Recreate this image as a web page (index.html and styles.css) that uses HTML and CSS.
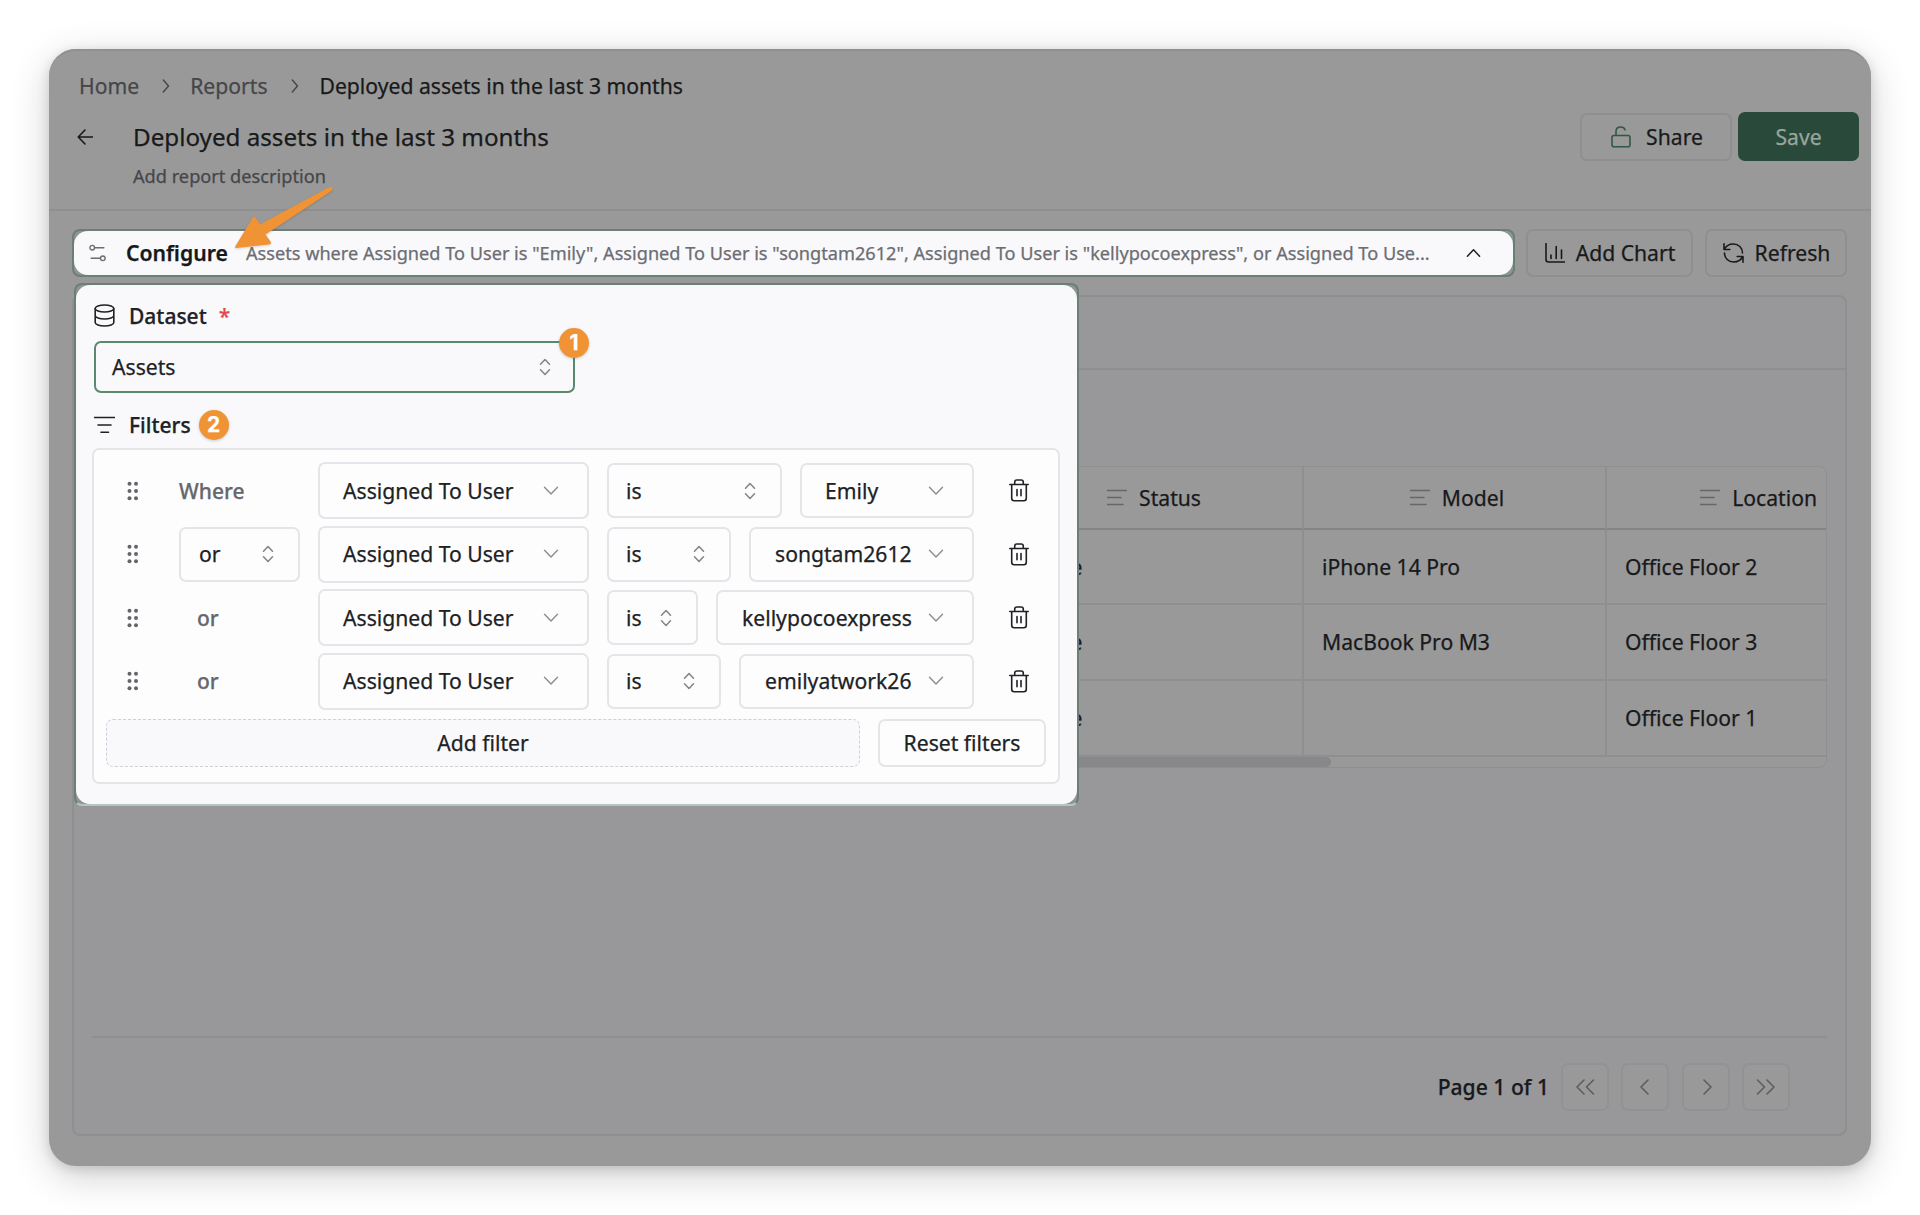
FILE: index.html
```html
<!DOCTYPE html>
<html lang="en">
<head>
<meta charset="utf-8">
<title>Deployed assets in the last 3 months</title>
<link rel="stylesheet" href="styles.css">
</head>
<body>
<svg class="sprite" width="0" height="0">
  <symbol id="down" viewBox="0 0 16 10"><path d="M1.500 1.200 8 8l6.500-6.800"/></symbol>
  <symbol id="updown" viewBox="0 0 12 18"><path d="M1.500 6.200 6 1.500l4.500 4.700M1.500 11.800 6 16.500l4.500-4.700"/></symbol>
  <symbol id="grip" viewBox="0 0 12 20"><g fill="currentColor" stroke="none"><circle cx="2.500" cy="2.700" r="2"/><circle cx="9" cy="2.700" r="2"/><circle cx="2.500" cy="10" r="2"/><circle cx="9" cy="10" r="2"/><circle cx="2.500" cy="17.200" r="2"/><circle cx="9" cy="17.200" r="2"/></g></symbol>
  <symbol id="trash" viewBox="0 0 20 23"><path d="M.8 5.500h18.400M2.700 5.500v13.800q0 2.500 2.500 2.500h9.600q2.500 0 2.500-2.500V5.500M5.700 5.500V3.200Q5.700 1 7.900 1h4.200q2.200 0 2.200 2.200v2.300M8 10.500v6.200M12 10.500v6.200"/></symbol>
  <symbol id="lines" viewBox="0 0 20 18"><path d="M0 1.500h19.500M0 8.500h14M0 15.500h16"/></symbol>
  <symbol id="crumb" viewBox="0 0 8 14"><path d="M1.300 1 6.500 7l-5.200 6"/></symbol>
</svg>

<div class="window">
  <header class="header">
    <nav class="crumbs">
      <span>Home</span><svg class="crumb-sep"><use href="#crumb"/></svg>
      <span>Reports</span><svg class="crumb-sep"><use href="#crumb"/></svg>
      <span class="current">Deployed assets in the last 3 months</span>
    </nav>
    <div class="title-row">
      <svg class="back" viewBox="0 0 16 16"><path d="M15.500 8H1.200M8 1 1.200 8 8 15"/></svg>
      <h1>Deployed assets in the last 3 months</h1>
      <button class="btn share"><svg viewBox="0 0 20 22"><path d="M5 9.500V5.500C5 2.800 7 1 9.700 1c2 0 3.700 1 4.400 2.800M3 9.500h14q2 0 2 2v7.300q0 2-2 2H3q-2 0-2-2v-7.300q0-2 2-2z"/></svg>Share</button>
      <button class="btn save">Save</button>
    </div>
    <p class="description">Add report description</p>
  </header>

  <main class="main">
    <div class="toolbar">
      <div class="frame frame-bar">
        <div class="configure">
          <svg class="sliders" viewBox="0 0 16 17"><circle cx="3" cy="3.500" r="2.200"/><path d="M5.200 3.500H14M2 13.500h8.700"/><circle cx="13" cy="13.500" r="2.200"/></svg>
          <strong>Configure</strong>
          <span class="summary">Assets where Assigned To User is "Emily", Assigned To User is "songtam2612", Assigned To User is "kellypocoexpress", or Assigned To Use...</span>
          <svg class="up" viewBox="0 0 16 10"><path d="M1.500 8.500 8 1.500l6.500 7"/></svg>
        </div>
      </div>
      <button class="btn chart"><svg viewBox="0 0 20 20"><path d="M1 .5V16.500q0 2.500 2.500 2.500h16M6 12v3.500M11.200 3.500v12M16.500 7v8.500"/></svg>Add Chart</button>
      <button class="btn refresh"><svg viewBox="0 0 21 20"><path d="M1 .8v5.700h5.800M1.300 6.300C3 3 6.300 1 10.300 1c5.200 0 9.200 3.700 9.200 9M20 19.200v-5.700h-5.800M19.700 13.700C18 17 14.700 19 10.700 19c-5.200 0-9.200-3.700-9.200-9"/></svg>Refresh</button>
    </div>

    <section class="card">
      <div class="card-head"></div>
      <div class="card-body">
        <div class="table">
          <div class="th"></div><div class="th"></div><div class="th"></div>
          <div class="th"><svg><use href="#lines"/></svg>Status</div>
          <div class="th"><svg><use href="#lines"/></svg>Model</div>
          <div class="th loc"><svg><use href="#lines"/></svg>Location</div>
          <div class="td"></div><div class="td"></div><div class="td"></div>
          <div class="td status">Active</div><div class="td">iPhone 14 Pro</div><div class="td">Office Floor 2</div>
          <div class="td"></div><div class="td"></div><div class="td"></div>
          <div class="td status">Active</div><div class="td">MacBook Pro M3</div><div class="td">Office Floor 3</div>
          <div class="td"></div><div class="td"></div><div class="td"></div>
          <div class="td status">Active</div><div class="td"></div><div class="td">Office Floor 1</div>
          <div class="scroll"><div class="thumb"></div></div>
        </div>
      </div>
      <footer class="pager">
        <span>Page 1 of 1</span>
        <button><svg viewBox="0 0 20 16"><path d="M9 1 2 8l7 7M18.500 1l-7 7 7 7"/></svg></button>
        <button><svg viewBox="0 0 20 16"><path d="M13 1 6 8l7 7"/></svg></button>
        <button><svg viewBox="0 0 20 16"><path d="m8 1 7 7-7 7"/></svg></button>
        <button><svg viewBox="0 0 20 16"><path d="m1.500 1 7 7-7 7M11 1l7 7-7 7"/></svg></button>
      </footer>
    </section>

    <div class="frame popover">
      <div class="panel">
        <div class="label"><svg class="i-data" viewBox="0 0 21 23"><ellipse cx="10.500" cy="4.500" rx="9.300" ry="3.500"/><path d="M1.200 4.500v14c0 2 4.200 3.500 9.300 3.500s9.300-1.500 9.300-3.500v-14M1.200 11.500c0 2 4.200 3.500 9.300 3.500s9.300-1.500 9.300-3.500"/></svg>Dataset<em>*</em></div>
        <div class="select dataset">Assets<svg class="updown"><use href="#updown"/></svg><b class="badge badge-1">1</b></div>
        <div class="label filters-label"><svg class="i-filter" viewBox="0 0 21 18"><path d="M0 1.500h21M4 9h13M7 16.300h7.500"/></svg>Filters<b class="badge">2</b></div>
        <div class="filters">
          <div class="row">
            <svg class="grip"><use href="#grip"/></svg>
            <div class="join"><span class="where">Where</span></div>
            <div class="select field">Assigned To User<svg class="down"><use href="#down"/></svg></div>
            <div class="select op">is<svg class="updown"><use href="#updown"/></svg></div>
            <div class="select value v1"><span>Emily</span><svg class="down"><use href="#down"/></svg></div>
            <svg class="trash"><use href="#trash"/></svg>
          </div>
          <div class="row">
            <svg class="grip"><use href="#grip"/></svg>
            <div class="join"><div class="select or">or<svg class="updown"><use href="#updown"/></svg></div></div>
            <div class="select field">Assigned To User<svg class="down"><use href="#down"/></svg></div>
            <div class="select op">is<svg class="updown"><use href="#updown"/></svg></div>
            <div class="select value v2"><span>songtam2612</span><svg class="down"><use href="#down"/></svg></div>
            <svg class="trash"><use href="#trash"/></svg>
          </div>
          <div class="row">
            <svg class="grip"><use href="#grip"/></svg>
            <div class="join"><span class="plain">or</span></div>
            <div class="select field">Assigned To User<svg class="down"><use href="#down"/></svg></div>
            <div class="select op">is<svg class="updown"><use href="#updown"/></svg></div>
            <div class="select value v3"><span>kellypocoexpress</span><svg class="down"><use href="#down"/></svg></div>
            <svg class="trash"><use href="#trash"/></svg>
          </div>
          <div class="row">
            <svg class="grip"><use href="#grip"/></svg>
            <div class="join"><span class="plain">or</span></div>
            <div class="select field">Assigned To User<svg class="down"><use href="#down"/></svg></div>
            <div class="select op">is<svg class="updown"><use href="#updown"/></svg></div>
            <div class="select value v4"><span>emilyatwork26</span><svg class="down"><use href="#down"/></svg></div>
            <svg class="trash"><use href="#trash"/></svg>
          </div>
          <div class="actions"><button class="add">Add filter</button><button class="reset">Reset filters</button></div>
        </div>
      </div>
    </div>
  </main>
  <svg class="arrow" viewBox="0 0 100 64"><path d="M98.500 1.500c-1-1-3-.8-5 .6L26 38.500 21.500 31.500Q20 29.500 18.500 32L1.200 60.500Q.5 62 2.500 62L35 58.500q3-.5 1.500-3L31.500 48.500 96.500 5.500q3-2.500 2-4z"/></svg>
</div>
</body>
</html>
```
FILE: styles.css
```css
:root {
  --dim: #999999;
  --dim-card: #98989a;
  --dim-line: #8f8f91;
  --dim-text: #18191b;
  --dim-muted: #45464a;
  --surface: #f9f9fb;
  --line: #e4e5e8;
  --text: #202124;
  --orange: #ef9335;
}
* { box-sizing: border-box; }
body {
  margin: 0;
  padding: 49px;
  height: 1215px;
  overflow: hidden;
  background: #fff;
  color: var(--text);
  font: 400 21.150px/28px "Noto Sans", sans-serif;
  -webkit-text-stroke: .25px currentColor;
}
svg { display: block; flex: none; fill: none; stroke: currentColor; stroke-width: 1.6; stroke-linecap: round; stroke-linejoin: round; }
.sprite { position: absolute; }
button { font: inherit; color: inherit; padding: 0; }
.window {
  position: relative;
  width: 1822px;
  height: 1117px;
  border-radius: 27px;
  background: var(--dim);
  color: var(--dim-text);
  box-shadow: 0 10px 38px rgba(0, 0, 0, .19), 0 3px 12px rgba(0, 0, 0, .14);
}

/* Header */
.header { height: 162px; border-bottom: 2px solid var(--dim-line); border-top: 2px solid #909090; border-radius: 27px 27px 0 0; padding: 20px 12px 0 28px; }
.crumbs { display: flex; align-items: center; height: 30px; padding-left: 2px; color: var(--dim-muted); }
.crumbs .current { margin-left: 1px; color: var(--dim-text); }
.crumb-sep { width: 8px; height: 14px; margin: 0 20px 0 23px; stroke-width: 1.4; }
.title-row { display: flex; align-items: center; height: 49px; margin-top: 11px; }
.back { width: 16px; height: 16px; }
h1 { flex: 1; margin: 0 0 0 40px; font-size: 24.200px; font-weight: 400; line-height: 32px; }
.description { margin: 2px 0 0 56px; font-size: 18.200px; line-height: 26px; color: var(--dim-muted); }
.btn { display: flex; align-items: center; justify-content: center; height: 48px; border: 2px solid #8f8f90; border-radius: 7px; background: none; }
.share { width: 152px; margin-right: 6px; padding-left: 2px; gap: 15px; }
.share svg { width: 20px; height: 22px; color: #315745; }
.save { width: 121px; height: 49px; border: 0; background: #29493a; color: #98a69f; }

/* Toolbar */
.main { position: relative; padding: 18px 24px 0 23px; }
.toolbar { display: flex; align-items: center; }
.frame { border: 2px solid #6b7f77; border-radius: 8px; background: #8f9592; }
.frame-bar { width: 1443px; height: 48px; }
.configure { display: flex; align-items: center; height: 44px; padding: 0 32px 0 15px; border-radius: 14px; background: var(--surface); color: #6c6d72; }
.sliders { width: 17px; height: 18px; stroke-width: 1.3; }
.configure strong { margin-left: 20px; font-size: 21.200px; font-weight: 600; color: #17181a; }
.summary { flex: 1; margin-left: 18px; font-size: 18.170px; white-space: nowrap; }
.up { width: 15px; height: 10px; color: var(--text); }
.chart { width: 167px; margin-left: 11px; padding-left: 1px; gap: 11px; }
.chart svg { width: 20px; height: 20px; }
.refresh { width: 142px; margin-left: 12px; padding-left: 1px; gap: 11px; }
.refresh svg { width: 21px; height: 20px; }

/* Result card */
.card { display: flex; flex-direction: column; height: 841px; margin-top: 18px; border: 2px solid var(--dim-line); border-radius: 8px; background: var(--dim-card); }
.card-head { height: 73px; border-bottom: 2px solid var(--dim-line); }
.card-body { flex: 1; padding: 96px 18px 0; }
.table {
  display: grid;
  grid-template-columns: 302px 303px 303px 303px 303px 220px;
  grid-template-rows: 63px 75px 76px 76px 10px;
  width: 1735px;
  border: 1px solid var(--dim-line);
  border-radius: 8px;
  background: var(--dim);
  overflow: hidden;
}
.th, .td { display: flex; align-items: center; border-right: 2px solid var(--dim-line); }
.th { justify-content: center; padding: 1px 0 0 5px; border-bottom: 2px solid #848485; }
.th svg { width: 20px; height: 18px; margin-right: 12px; color: #66676a; }
.th.loc { justify-content: flex-end; padding-right: 10px; }
.th:nth-child(6n), .td:nth-child(6n) { border-right: 0; }
.td { padding-left: 18px; border-bottom: 2px solid var(--dim-line); }
.td.status { padding-left: 22px; }
.scroll { grid-column: 1 / -1; }
.thumb { width: 1238px; height: 10px; border-radius: 0 5px 5px 0; background: #88888a; }
.pager { display: flex; align-items: center; justify-content: flex-end; height: 98px; margin: 0 18px; padding: 1px 37px 0 0; gap: 12.500px; border-top: 2px solid var(--dim-line); }
.pager span { font-weight: 500; margin-right: -1px; }
.pager button { display: flex; align-items: center; justify-content: center; width: 48px; height: 48px; border: 2px solid #929293; border-radius: 7px; background: var(--dim); color: #5d5e60; }
.pager svg { width: 20px; height: 16px; }

/* Configure popover */
.popover { position: absolute; left: 25px; top: 72px; width: 1005px; height: 523px; border-bottom-color: #b4c6bf; color: var(--text); }
.panel { height: 519px; padding: 18px 17px 0 18px; border-radius: 14px; background: var(--surface); }
.label { display: flex; align-items: center; height: 25px; font-size: 21px; font-weight: 500; }
.label em { margin-left: 12px; color: #e5484d; font-style: normal; }
.i-data { width: 21px; height: 23px; margin-right: 14px; }
.i-filter { width: 21px; height: 18px; margin-right: 14px; }
.select { display: flex; align-items: center; justify-content: space-between; height: 55px; border: 2px solid var(--line); border-radius: 7px; padding-left: 18px; background: #fdfdfe; }
.updown { width: 12px; height: 18px; color: #86878c; }
.down { width: 16px; height: 10px; color: #8c8d92; stroke-width: 1.4; }
.dataset { position: relative; width: 481px; height: 52px; margin-top: 13px; padding: 0 22px 0 16px; border-color: #5a8871; background: var(--surface); }
.badge { display: flex; align-items: center; justify-content: center; width: 30px; height: 30px; margin-left: 8px; border-radius: 50%; background: var(--orange); color: #fff; font: 700 21px/30px Inter, sans-serif; box-shadow: 0 1px 3px rgba(0, 0, 0, .2); }
.badge-1 { position: absolute; right: -16px; top: -15px; }
.filters-label { margin-top: 19px; }
.filters { width: 968px; height: 336px; margin-top: 11px; margin-left: -2px; padding: 12px; border: 2px solid var(--line); border-radius: 7px; background: #fdfdfe; }
.row { display: flex; align-items: center; height: 57px; margin-bottom: 6.500px; }
.grip { width: 12px; height: 20px; margin-left: 21px; color: #646569; }
.join { width: 139px; margin-left: 40px; }
.where, .plain { font-size: 21px; font-weight: 500; color: #66676c; }
.plain { margin-left: 18px; }
.or { width: 121px; padding-right: 24px; }
.field { width: 271px; height: 57px; padding: 0 28px 0 23px; }
.op { flex: 1; margin: 0 18px; padding: 0 24px 0 17px; }
.value { padding: 0 28px 0 23px; }
.v1 { width: 174px; }
.v2 { width: 225px; }
.v3 { width: 258px; }
.v4 { width: 235px; }
.v2, .v3, .v4 { padding-left: 24px; }
.trash { width: 20px; height: 23px; margin: 0 17px 0 35px; }
.actions { display: flex; justify-content: space-between; margin-top: 9px; }
.actions button { height: 48px; border-radius: 7px; }
.add { width: 754px; border: 1px dashed #cfd0d5; background: var(--surface); }
.reset { width: 168px; border: 2px solid var(--line); background: #fdfdfe; }

.arrow { position: absolute; left: 185px; top: 137px; width: 100px; height: 64px; fill: var(--orange); stroke: none; filter: drop-shadow(0 1px 1px rgba(0, 0, 0, .15)); }
```
